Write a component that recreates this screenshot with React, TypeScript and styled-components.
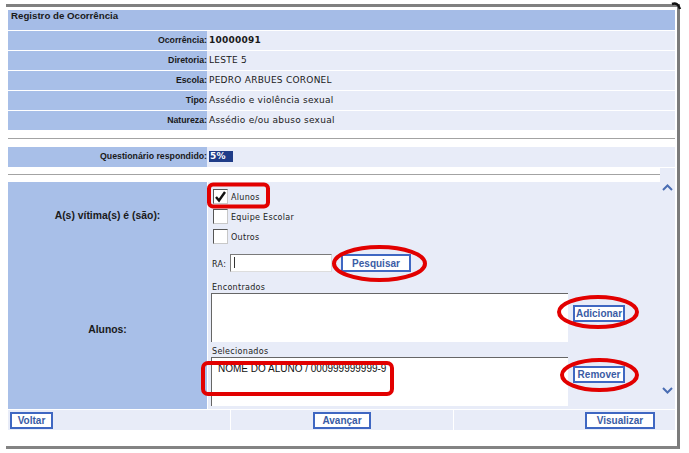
import React from "react";
import styled, { createGlobalStyle } from "styled-components";

const GlobalStyle = createGlobalStyle`
  html, body {
    margin: 0;
    padding: 0;
    background: #ffffff;
  }
  body {
    font-family: "DejaVu Sans", Verdana, sans-serif;
    color: #1a1a1a;
  }
`;

const LABEL_BG = "#a8bfe8";
const VALUE_BG = "#e8ecf8";
const RULE = "#a3a3a3";

const Page = styled.div`
  position: relative;
  width: 689px;
  height: 453px;
  padding: 4px 0 0 6px;
  box-sizing: border-box;
  overflow: hidden;
`;

const Frame = styled.div`
  width: 674px;
  height: 445px;
  box-sizing: border-box;
  border-top: 3px solid #808080;
  border-right: 3px solid #7b7b7b;
  border-bottom: 3px solid #838383;
  padding: 3px 2px 0 2px;
  display: flex;
  flex-direction: column;
`;

const Header = styled.div`
  height: 20px;
  line-height: 20px;
  background: #a5bce7;
  padding-left: 3px;
  font: bold 9.7px "Liberation Sans", Arial, sans-serif;
`;

const InfoRow = styled.div<{ $sep?: boolean }>`
  display: grid;
  grid-template-columns: 199px 1fr;
  height: 20px;
  box-sizing: border-box;
  border-top: ${({ $sep }) => ($sep ? "1px solid #ffffff" : "none")};
`;

const InfoLabel = styled.div`
  background: ${LABEL_BG};
  text-align: right;
  font: bold 8.75px "Liberation Sans", Arial, sans-serif;
  line-height: 19px;
  white-space: nowrap;
`;

const InfoValue = styled.div<{ $bold?: boolean }>`
  background: ${VALUE_BG};
  padding-left: 2px;
  font-size: 9px;
  font-weight: ${({ $bold }) => ($bold ? "bold" : "normal")};
  letter-spacing: 0.25px;
  line-height: 19px;
  white-space: nowrap;
`;

const Rule = styled.div<{ $top: number; $bottom: number }>`
  height: 1px;
  background: ${RULE};
  margin-top: ${({ $top }) => $top}px;
  margin-bottom: ${({ $bottom }) => $bottom}px;
`;

const Progress = styled.span`
  display: inline-block;
  width: 24px;
  height: 11px;
  line-height: 11px;
  margin-top: 4px;
  padding-left: 1px;
  box-sizing: border-box;
  background: #1f3c88;
  color: #ffffff;
  font: bold 9px "DejaVu Sans", sans-serif;
  vertical-align: top;
`;

const ScrollArea = styled.div`
  margin-top: 1px;
  height: 241px;
  display: flex;
`;

const ScrollContent = styled.div`
  flex: 1;
  background: #ffffff;
  padding-top: 6px;
  display: flex;
  flex-direction: column;
`;

const ScrollBar = styled.div`
  width: 15px;
  background: ${VALUE_BG};
  display: flex;
  flex-direction: column;
  justify-content: space-between;
  align-items: center;
  padding: 16px 0 15px;
  box-sizing: border-box;
`;

const FormRow = styled.div<{ $h: number; $top?: number }>`
  display: grid;
  grid-template-columns: 199px 1fr;
  column-gap: 1px;
  height: ${({ $h }) => $h}px;
  margin-top: ${({ $top }) => $top ?? 0}px;
`;

const FormLabel = styled.div`
  background: ${LABEL_BG};
  display: flex;
  align-items: center;
  justify-content: center;
  font: bold 10.4px "Liberation Sans", Arial, sans-serif;
`;

const FormValue = styled.div<{ $pad: string }>`
  background: ${VALUE_BG};
  padding: ${({ $pad }) => $pad};
  display: flex;
  flex-direction: column;
`;

const CheckItem = styled.div`
  display: flex;
  align-items: flex-end;
  height: 15px;
  margin-bottom: 5px;
`;

const Box = styled.span`
  width: 15px;
  height: 15px;
  box-sizing: border-box;
  background: #ffffff;
  border: 1px solid;
  border-color: #555555 #c8c8c8 #c8c8c8 #555555;
  display: flex;
  align-items: center;
  justify-content: center;
`;

const SmallText = styled.span`
  font-size: 8px;
  letter-spacing: 0.3px;
  color: #222222;
  line-height: 10px;
`;

const CheckText = styled(SmallText)`
  margin-left: 3px;
  padding-bottom: 1px;
`;

const RaRow = styled.div`
  display: flex;
  align-items: center;
  height: 18px;
`;

const RaLabel = styled(SmallText)`
  width: 19px;
  padding-left: 1px;
  box-sizing: border-box;
  margin-top: 4px;
`;

const RaInput = styled.div`
  width: 102px;
  height: 18px;
  box-sizing: border-box;
  background: #ffffff;
  border: 1px solid;
  border-color: #7a7a7a #dddddd #dddddd #7a7a7a;
  padding: 2px 0 0 3px;
`;

const Caret = styled.div`
  width: 1px;
  height: 11px;
  background: #333333;
`;

const Button = styled.div<{ $w: number; $h?: number; $gap?: number; $top?: number }>`
  width: ${({ $w }) => $w}px;
  height: ${({ $h }) => $h ?? 17}px;
  margin-left: ${({ $gap }) => $gap ?? 0}px;
  margin-top: ${({ $top }) => $top ?? 0}px;
  box-sizing: border-box;
  border: 2px solid #3f67c2;
  background: #ffffff;
  color: #3a5ca5;
  font: bold 10px "Liberation Sans", Arial, sans-serif;
  display: flex;
  align-items: center;
  justify-content: center;
  flex-shrink: 0;
`;

const Caption = styled(SmallText)<{ $top: number }>`
  display: block;
  height: 10px;
  margin-top: ${({ $top }) => $top}px;
  padding-left: 1px;
`;

const ListRow = styled.div`
  display: flex;
  align-items: flex-start;
`;

const ListBox = styled.div`
  width: 357px;
  height: 49px;
  box-sizing: border-box;
  background: #ffffff;
  border-top: 1px solid #666666;
  border-left: 1px solid #666666;
  padding: 5px 0 0 6px;
  font: 10px "Liberation Sans", Arial, sans-serif;
  color: #111111;
`;

const Footer = styled.div`
  margin-top: 1px;
  height: 20px;
  display: grid;
  grid-template-columns: 222px 222px 1fr;
  column-gap: 1px;
`;

const FooterCell = styled.div<{ $align: "flex-start" | "center" | "flex-end"; $pad: string }>`
  background: ${VALUE_BG};
  display: flex;
  align-items: center;
  justify-content: ${({ $align }) => $align};
  padding: ${({ $pad }) => $pad};
`;

const Overlay = styled.svg`
  position: absolute;
  left: 0;
  top: 0;
  pointer-events: none;
`;

const Chevron = ({ up }: { up?: boolean }) => (
  <svg width="11" height="7" viewBox="0 0 11 7">
    <path
      d={up ? "M1 6 L5.5 1.5 L10 6" : "M1 1 L5.5 5.5 L10 1"}
      fill="none"
      stroke="#4a6db3"
      strokeWidth="2"
    />
  </svg>
);

const Check = () => (
  <svg width="13" height="13" viewBox="0 0 13 13">
    <path d="M2 7 L5 10.5 L11 2" fill="none" stroke="#111" strokeWidth="2.4" />
  </svg>
);

const info = [
  { label: "Ocorrência:", value: "10000091", bold: true },
  { label: "Diretoria:", value: "LESTE 5" },
  { label: "Escola:", value: "PEDRO ARBUES CORONEL" },
  { label: "Tipo:", value: "Assédio e violência sexual" },
  { label: "Natureza:", value: "Assédio e/ou abuso sexual" },
];

const victims = [
  { label: "Alunos", checked: true },
  { label: "Equipe Escolar", checked: false },
  { label: "Outros", checked: false },
];

export default function App() {
  return (
    <>
      <GlobalStyle />
      <Page>
        <Frame>
          <Header>Registro de Ocorrência</Header>
          {info.map((row) => (
            <InfoRow key={row.label} $sep>
              <InfoLabel>{row.label}</InfoLabel>
              <InfoValue $bold={row.bold}>{row.value}</InfoValue>
            </InfoRow>
          ))}
          <Rule $top={8} $bottom={8} />
          <InfoRow>
            <InfoLabel>Questionário respondido:</InfoLabel>
            <InfoValue>
              <Progress>5%</Progress>
            </InfoValue>
          </InfoRow>

          <ScrollArea>
            <ScrollContent>
              <Rule $top={0} $bottom={7} />
              <FormRow $h={66}>
                <FormLabel>A(s) vítima(s) é (são):</FormLabel>
                <FormValue $pad="7px 0 0 5px">
                  {victims.map((v) => (
                    <CheckItem key={v.label}>
                      <Box>{v.checked && <Check />}</Box>
                      <CheckText>{v.label}</CheckText>
                    </CheckItem>
                  ))}
                </FormValue>
              </FormRow>
              <FormRow $h={160} $top={1}>
                <FormLabel>Alunos:</FormLabel>
                <FormValue $pad="5px 0 0 3px">
                  <RaRow>
                    <RaLabel>RA:</RaLabel>
                    <RaInput>
                      <Caret />
                    </RaInput>
                    <Button $w={70} $h={18} $gap={9}>
                      Pesquisar
                    </Button>
                  </RaRow>
                  <Caption $top={11}>Encontrados</Caption>
                  <ListRow>
                    <ListBox />
                    <Button $w={52} $gap={5} $top={12}>
                      Adicionar
                    </Button>
                  </ListRow>
                  <Caption $top={5}>Selecionados</Caption>
                  <ListRow>
                    <ListBox>NOME DO ALUNO / 000999999999-9</ListBox>
                    <Button $w={52} $gap={5} $top={9}>
                      Remover
                    </Button>
                  </ListRow>
                </FormValue>
              </FormRow>
            </ScrollContent>
            <ScrollBar>
              <Chevron up />
              <Chevron />
            </ScrollBar>
          </ScrollArea>

          <Footer>
            <FooterCell $align="flex-start" $pad="0 0 0 2px">
              <Button $w={43}>Voltar</Button>
            </FooterCell>
            <FooterCell $align="center" $pad="0">
              <Button $w={58}>Avançar</Button>
            </FooterCell>
            <FooterCell $align="flex-end" $pad="0 20px 0 0">
              <Button $w={70}>Visualizar</Button>
            </FooterCell>
          </Footer>
        </Frame>

        <Overlay width="689" height="453" viewBox="0 0 689 453">
          <g fill="none" stroke="#e20000" strokeWidth="4">
            <rect x="209" y="184.5" width="59" height="22" rx="4" />
            <ellipse cx="379.5" cy="263.5" rx="45.5" ry="16.5" />
            <ellipse cx="598" cy="312" rx="39" ry="15" />
            <rect x="203" y="363" width="189" height="31" rx="5" />
            <ellipse cx="599.5" cy="375" rx="37.5" ry="15" />
          </g>
          <path d="M672 4 Q678 2 680 9" fill="none" stroke="#111" strokeWidth="2.5" />
        </Overlay>
      </Page>
    </>
  );
}
